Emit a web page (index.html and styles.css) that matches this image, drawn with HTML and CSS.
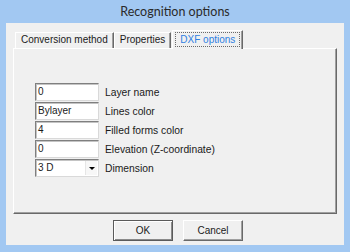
FILE: index.html
```html
<!DOCTYPE html>
<html>
<head>
<meta charset="utf-8">
<link rel="stylesheet" href="styles.css">
</head>
<body>
<div class="window">
  <div class="titlebar">Recognition options</div>
  <div class="client">
    <div class="tabs">
      <div class="tab">Conversion method</div>
      <div class="tab">Properties</div>
      <div class="tab active"><span class="focus">DXF options</span></div>
    </div>
    <div class="panel">
      <div class="form">
        <div class="row"><div class="field">0</div><span class="label">Layer name</span></div>
        <div class="row"><div class="field">Bylayer</div><span class="label">Lines color</span></div>
        <div class="row"><div class="field">4</div><span class="label">Filled forms color</span></div>
        <div class="row"><div class="field">0</div><span class="label">Elevation (Z-coordinate)</span></div>
        <div class="row"><div class="field combo"><span>3 D</span><span class="drop"><span class="arrow"></span></span></div><span class="label">Dimension</span></div>
      </div>
    </div>
    <div class="buttons">
      <div class="btn default">OK</div>
      <div class="btn">Cancel</div>
    </div>
  </div>
</div>
</body>
</html>
```

FILE: styles.css
```css
html, body {
  margin: 0;
  padding: 0;
}
body {
  width: 350px;
  height: 252px;
  overflow: hidden;
  font-family: "Liberation Sans", Arial, sans-serif;
}
.window {
  width: 350px;
  height: 252px;
  box-sizing: border-box;
  background: #a2c8f2;
  display: flex;
  flex-direction: column;
  padding: 0 6px 7px 6px;
}
.titlebar {
  height: 23px;
  line-height: 23px;
  text-align: center;
  font-family: Lato, "Liberation Sans", sans-serif;
  font-size: 12.5px;
  color: #2a2a2a;
}
.client {
  flex: 1;
  background: #f0f0f0;
  display: flex;
  flex-direction: column;
  padding: 8px 7px 0 7px;
}
.tabs {
  display: flex;
  align-items: flex-end;
  height: 18px;
  padding-left: 2px;
  position: relative;
  z-index: 1;
  margin-bottom: -1px;
}
.tab {
  box-sizing: border-box;
  height: 16px;
  line-height: 14px;
  font-size: 10px;
  color: #1a1a1a;
  padding: 0 5px 0 5px;
  border-top: 1px solid #ffffff;
  border-left: 1px solid #ffffff;
  border-right: 1px solid #696969;
  box-shadow: inset -1px 0 0 #a0a0a0;
  background: #f0f0f0;
  margin-bottom: 1px;
}
.tab.active {
  height: 19px;
  margin-bottom: 0;
  padding: 1px 2px 2px 2px;
  margin-left: 1px;
  color: #2f7fe2;
}
.focus {
  display: block;
  height: 15px;
  line-height: 14px;
  box-sizing: border-box;
  border: 1px dotted #6a6a6a;
  padding: 0 4px;
  text-align: center;
}
.panel {
  height: 166px;
  box-sizing: border-box;
  border-top: 1px solid #ffffff;
  border-left: 1px solid #ffffff;
  border-right: 1px solid #696969;
  border-bottom: 1px solid #696969;
  box-shadow: inset -1px -1px 0 #a0a0a0;
  padding: 34px 0 0 21px;
}
.form {
  display: flex;
  flex-direction: column;
  gap: 1px;
}
.row {
  display: flex;
  align-items: center;
  height: 18px;
}
.field {
  box-sizing: border-box;
  width: 64px;
  height: 18px;
  background: #ffffff;
  border-style: solid;
  border-width: 1px;
  border-color: #7f7f7f #d9d9d9 #d9d9d9 #7f7f7f;
  box-shadow: inset 1px 1px 0 #c4c4c4;
  font-size: 10px;
  line-height: 16px;
  padding-left: 2px;
  color: #1a1a1a;
}
.combo {
  display: flex;
  justify-content: space-between;
  padding-right: 1px;
}
.drop {
  width: 12px;
  height: 14px;
  margin-top: 1px;
  box-sizing: border-box;
  border-left: 1px solid #e6e6e6;
  background: #f7f7f7;
  display: flex;
  align-items: center;
  justify-content: center;
}
.arrow {
  width: 0;
  height: 0;
  border-left: 3px solid transparent;
  border-right: 3px solid transparent;
  border-top: 3px solid #000;
}
.label {
  margin-left: 6px;
  font-size: 10.3px;
  color: #1a1a1a;
}
.buttons {
  display: flex;
  justify-content: center;
  gap: 10px;
  padding-left: 6px;
  margin-top: 6px;
}
.btn {
  box-sizing: border-box;
  width: 60px;
  height: 21px;
  line-height: 19px;
  text-align: center;
  font-size: 10px;
  color: #1a1a1a;
  background: #f0f0f0;
  border-style: solid;
  border-width: 1px;
  border-color: #ffffff #696969 #696969 #ffffff;
  box-shadow: inset -1px -1px 0 #a0a0a0;
}
.btn.default {
  border-color: #5a5a5a;
  box-shadow: inset 1px 1px 0 #ffffff, inset -1px -1px 0 #8a8a8a;
}
```
